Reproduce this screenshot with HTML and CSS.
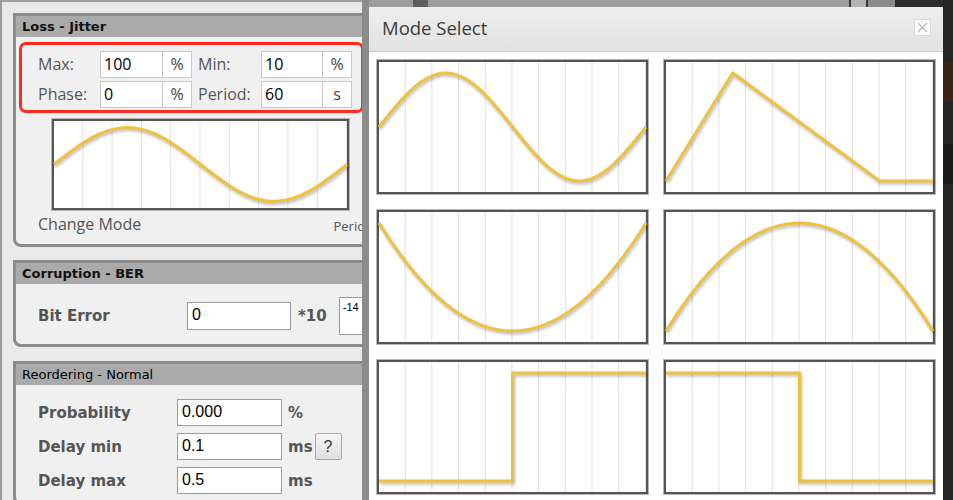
FILE: index.html
```html
<!DOCTYPE html>
<html lang="en">
<head>
<meta charset="utf-8">
<title>Mode Select</title>
<link rel="stylesheet" href="styles.css">
</head>
<body>
<div class="page">
  <div class="left">
    <section class="panel">
      <h2 class="panel-head">Loss - Jitter</h2>
      <div class="loss-body">
        <div class="jitter">
          <span class="jlabel">Max:</span>
          <span class="jfield">100</span>
          <span class="junit">%</span>
          <span class="jlabel second">Min:</span>
          <span class="jfield">10</span>
          <span class="junit">%</span>
          <span class="jlabel">Phase:</span>
          <span class="jfield">0</span>
          <span class="junit">%</span>
          <span class="jlabel second">Period:</span>
          <span class="jfield">60</span>
          <span class="junit">s</span>
        </div>
        <div class="mini-chart">
          <svg width="293" height="87" viewBox="0 0 293 87"><path class="curve" d="M0,43.5 C23.89,24.54 47.03,6.5 73.25,6.5 C99.47,6.5 122.61,24.54 146.5,43.5 C170.39,62.46 193.53,80.5 219.75,80.5 C245.97,80.5 269.11,62.46 293,43.5"/></svg>
        </div>
        <div class="chart-foot"><span class="change">Change Mode</span><span class="period">Period</span></div>
      </div>
    </section>

    <section class="panel panel-2">
      <h2 class="panel-head">Corruption - BER</h2>
      <div class="ber-body">
        <div class="ber-row">
          <span class="blabel wide">Bit Error</span>
          <span class="bfield">0</span>
          <span class="times">*10</span>
          <span class="exp">-14</span>
        </div>
      </div>
    </section>

    <section class="panel panel-3">
      <h2 class="panel-head regular">Reordering - Normal</h2>
      <div class="reo-body">
        <div class="reo-row">
          <span class="blabel">Probability</span>
          <span class="bfield r">0.000</span>
          <span class="unit">%</span>
        </div>
        <div class="reo-row">
          <span class="blabel">Delay min</span>
          <span class="bfield r">0.1</span>
          <span class="unit">ms</span>
          <span class="qbtn">?</span>
        </div>
        <div class="reo-row">
          <span class="blabel">Delay max</span>
          <span class="bfield r">0.5</span>
          <span class="unit">ms</span>
        </div>
      </div>
    </section>
  </div>
  <div class="shade"></div>
  <div class="behind">
    <div class="topbar">
      <span class="sp1"></span><span class="blk-dark"></span><span class="grow"></span>
      <span class="thin"></span><span class="blk-light"></span><span class="thin"></span><span class="blk-mid"></span><span class="blk-black"></span>
    </div>
  </div>
  <div class="edge"><span class="patch"></span><span class="patch2"></span></div>
</div>

<div class="modal">
  <div class="modal-head">
    <span class="modal-title">Mode Select</span>
    <span class="close"><svg width="15" height="15" viewBox="0 0 15 15"><path d="M3,3 L12,12 M12,3 L3,12" stroke="#bdbdbd" stroke-width="1.3" fill="none"/></svg></span>
  </div>
  <div class="modal-body">
    <div class="chart"><svg width="267" height="130" viewBox="0 0 267 130"><path class="curve" d="M0,65 C21.77,37.34 42.86,11 66.75,11 C90.64,11 111.73,37.34 133.5,65 C155.27,92.66 176.36,119 200.25,119 C224.14,119 245.23,92.66 267,65"/></svg></div>
    <div class="chart"><svg width="267" height="130" viewBox="0 0 267 130"><path class="curve" d="M0,119 L66.75,11 L213.6,119 L267,119"/></svg></div>
    <div class="chart"><svg width="267" height="130" viewBox="0 0 267 130"><path class="curve" d="M0,11 Q133.5,227 267,11"/></svg></div>
    <div class="chart"><svg width="267" height="130" viewBox="0 0 267 130"><path class="curve" d="M0,119 Q133.5,-97 267,119"/></svg></div>
    <div class="chart"><svg width="267" height="130" viewBox="0 0 267 130"><path class="curve" d="M0,119 H133.5 V11 H267"/></svg></div>
    <div class="chart"><svg width="267" height="130" viewBox="0 0 267 130"><path class="curve" d="M0,11 H133.5 V119 H267"/></svg></div>
  </div>
</div>
</body>
</html>
```

FILE: styles.css
```css
* { box-sizing: border-box; margin: 0; padding: 0; }
html, body { width: 953px; height: 500px; overflow: hidden; }
body { background: #9b9b9b; font-family: "Open Sans", sans-serif; position: relative; }

.page { display: flex; height: 500px; }
.left {
  width: 362px; flex: none; height: 500px;
  background: #e9e9e9;
  border-top: 2px solid #a0a0a0; border-left: 2px solid #9a9a9a;
  padding: 11px 0 0 11px; overflow: hidden;
}
.shade { width: 7px; flex: none; background: #8c8c8c; }
.behind { width: 574px; flex: none; background: #9d9d9d; }
.edge { width: 10px; flex: none; background: #252525; display: flex; flex-direction: column; }
.edge .patch { margin-top: 62px; height: 40px; background: #3a2417; }
.edge .patch2 { margin-top: 42px; height: 40px; background: #1a1a1a; }

.topbar { height: 7px; display: flex; }
.topbar .sp1 { width: 44px; }
.topbar .blk-dark { width: 15px; background: #5e5e5e; }
.topbar .grow { flex: 1; }
.topbar .thin { width: 2px; background: #3a3a3a; }
.topbar .blk-light { width: 15px; background: #b3b3b3; }
.topbar .blk-mid { width: 27px; background: #8a8a8a; }
.topbar .blk-black { width: 48px; background: #2b2b2b; }

/* panels */
.panel {
  width: 360px;
  border: 3px solid #8b8b8b; border-right: 0;
  border-radius: 0 0 0 8px;
  background: #f0f0f0;
}
.panel-2 { margin-top: 13px; }
.panel-3 { margin-top: 14px; }
.panel-head {
  font: bold 13px "DejaVu Sans", sans-serif; color: #111;
  height: 21px; line-height: 21px; padding-left: 6px;
  background: #aaaaaa;
}
.panel-head.regular { font-weight: normal; color: #000; }

/* loss jitter */
.loss-body { padding: 5px 0 8px 3px; }
.jitter {
  width: 345px;
  border: 3px solid #ff2b1e; border-radius: 7px;
  padding: 6px 0 2px 16px;
  display: grid;
  grid-template-columns: 62px 63px 29px 69px 62px 29px;
  grid-auto-rows: 27px; row-gap: 3px;
}
.jlabel { font-size: 16px; color: #555; line-height: 27px; }
.jlabel.second { padding-left: 6px; }
.jfield {
  border: 1px solid #c8c8c8; background: #fff;
  font-size: 16px; line-height: 25px; color: #000; padding-left: 3px;
}
.junit {
  border: 1px solid #c8c8c8; border-left: 0; background: #fff;
  text-align: center; line-height: 25px; color: #444; font-size: 16px;
}
.mini-chart {
  margin: 6px 0 0 33px;
  width: 297px; height: 91px;
  border: 2px solid #555;
  box-shadow: 0 0 0 1px #b5b5b5;
  background-color: #fff;
  background-image: linear-gradient(90deg, transparent 0 28.3px, #dfdfdf 28.3px);
  background-size: 29.3px 100%;
}
.mini-chart svg, .chart svg { display: block; overflow: visible; }
.chart-foot { margin-top: 2px; height: 24px; padding-left: 19px; display: flex; align-items: center; white-space: nowrap; }
.change { width: 296px; font-size: 16px; color: #555; }
.period { font-size: 13px; color: #555; padding-top: 3px; }

.curve {
  fill: none; stroke: #efc13f; stroke-width: 3;
  filter: drop-shadow(1px 2px 1.5px rgba(0, 0, 0, 0.28));
}

/* corruption */
.ber-body { padding: 13px 0 9px 22px; }
.ber-row { display: flex; align-items: center; height: 38px; white-space: nowrap; }
.blabel { width: 139px; font: bold 15px "DejaVu Sans", sans-serif; color: #555; }
.blabel.wide { width: 149px; }
.bfield {
  font: 16px "Liberation Sans", sans-serif; color: #000;
  width: 104px; height: 28px;
  border: 1px solid #9c9c9c; background: #fff;
  line-height: 24px; padding-left: 4px;
}
.bfield.r { width: 105px; height: 27px; line-height: 23px; }
.times { margin-left: 7px; font: bold 15px "DejaVu Sans", sans-serif; color: #555; }
.exp {
  font: 11px "Liberation Sans", sans-serif; color: #000;
  line-height: 13px;
  margin-left: 12px; width: 30px; height: 38px;
  border: 1px solid #9a9a9a; background: #fff;
  padding: 3px 0 0 3px; align-self: center;
}

/* reordering */
.reo-body { padding: 14px 0 8px 22px; display: flex; flex-direction: column; gap: 7px; }
.reo-row { display: flex; align-items: center; height: 27px; white-space: nowrap; }
.unit { margin-left: 6px; font: bold 15px "DejaVu Sans", sans-serif; color: #555; }
.qbtn {
  font: 16px "Liberation Sans", sans-serif; color: #333;
  margin-left: 2px; width: 27px; height: 27px;
  border: 1px solid #a8a8a8; border-radius: 2px;
  background: linear-gradient(#f7f7f7, #dedede);
  text-align: center; line-height: 25px;
}

/* modal */
.modal {
  position: absolute; left: 369px; top: 7px;
  width: 574px; height: 493px;
  background: #fff; overflow: hidden;
}
.modal-head {
  height: 45px;
  display: flex; align-items: center; justify-content: space-between;
  padding: 0 12px 4px 13px;
  background: linear-gradient(#eeeeee, #e2e2e2);
  border-bottom: 1px solid #d2d2d2;
}
.modal-title { font-size: 18.5px; color: #3c3c3c; }
.close {
  width: 17px; height: 17px;
  border: 1px solid #d8d8d8; background: #fbfbfb;
  display: flex; align-items: center; justify-content: center;
}
.modal-body {
  padding: 8px 8px 0 8px;
  display: grid;
  grid-template-columns: 271px 271px;
  grid-auto-rows: 134px;
  gap: 16px;
}
.chart {
  border: 2px solid #555;
  box-shadow: 0 0 0 1px #b5b5b5;
  background-color: #fff;
  background-image: linear-gradient(90deg, transparent 0 25.7px, #dfdfdf 25.7px);
  background-size: 26.7px 100%;
}
```
